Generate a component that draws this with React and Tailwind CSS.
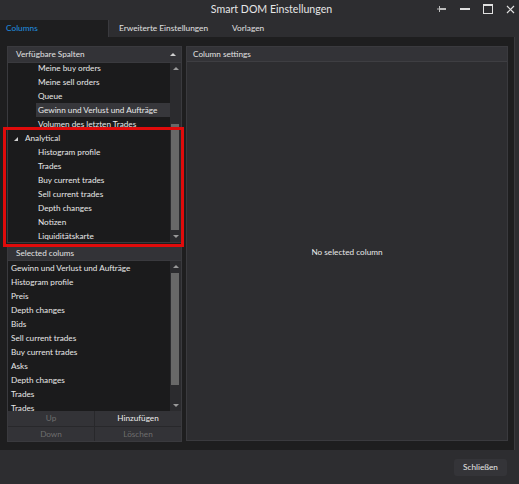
import React from "react";

const AVAILABLE = [
  { label: "Meine buy orders" },
  { label: "Meine sell orders" },
  { label: "Queue" },
  { label: "Gewinn und Verlust und Aufträge", selected: true },
  { label: "Volumen des letzten Trades" },
  { label: "Analytical", group: true },
  { label: "Histogram profile" },
  { label: "Trades" },
  { label: "Buy current trades" },
  { label: "Sell current trades" },
  { label: "Depth changes" },
  { label: "Notizen" },
  { label: "Liquiditätskarte" },
];

const SELECTED = [
  "Gewinn und Verlust und Aufträge",
  "Histogram profile",
  "Preis",
  "Depth changes",
  "Bids",
  "Sell current trades",
  "Buy current trades",
  "Asks",
  "Depth changes",
  "Trades",
  "Trades",
];

function ScrollBar({ thumbTop, thumbHeight }) {
  return (
    <div className="relative w-[11px] shrink-0 bg-[#2b2b2e]">
      <div className="absolute left-[3px] top-[4px] h-0 w-0 border-x-[3px] border-b-[3px] border-x-transparent border-b-[#9a9a9a]" />
      <div
        className="absolute left-[1px] w-[8px] bg-[#686868]"
        style={{ top: thumbTop, height: thumbHeight }}
      />
      <div className="absolute bottom-[4px] left-[3px] h-0 w-0 border-x-[3px] border-t-[3px] border-x-transparent border-t-[#9a9a9a]" />
    </div>
  );
}

export default function App() {
  return (
    <div
      className="flex h-[484px] w-[519px] flex-col overflow-hidden bg-[#2d2d30] text-[8.2px] text-[#e0e0e0]"
      style={{ fontFamily: '"Segoe UI", Lato, "Noto Sans", sans-serif' }}
    >
      {/* title bar */}
      <div className="relative flex h-[20px] shrink-0 items-center justify-center">
        <span className="ml-[24px] text-[10.6px] text-[#e6e6e6]">Smart DOM Einstellungen</span>
        <div className="absolute right-[4px] top-0 flex h-[18px] items-center gap-[13px]">
          <svg width="10" height="8" viewBox="0 0 10 8">
            <rect x="2" y="3" width="7" height="2" fill="#bdbdbd" />
            <rect x="0" y="3.5" width="2" height="1" fill="#bdbdbd" />
            <rect x="2" y="1" width="1" height="6" fill="#bdbdbd" />
          </svg>
          <svg width="10" height="8" viewBox="0 0 10 8">
            <rect x="0" y="3" width="10" height="2" fill="#e0e0e0" />
          </svg>
          <svg width="10" height="10" viewBox="0 0 10 10">
            <rect x="0.5" y="0.5" width="9" height="9" fill="none" stroke="#e0e0e0" />
            <rect x="0.5" y="0.5" width="9" height="1.5" fill="#e0e0e0" />
          </svg>
          <svg width="9" height="9" viewBox="0 0 9 9">
            <path d="M1 1L8 8M8 1L1 8" stroke="#e0e0e0" strokeWidth="1.2" />
          </svg>
        </div>
      </div>

      {/* tabs */}
      <div className="flex h-[17px] shrink-0 items-center text-[8.3px]">
        <div className="flex h-full w-[109px] items-center border-r border-[#3a3a3e] bg-[#1e1e1f] pl-[6px] text-[#1e8fe0]">
          Columns
        </div>
        <div className="pl-[10px]">Erweiterte Einstellungen</div>
        <div className="pl-[24px]">Vorlagen</div>
      </div>

      {/* content */}
      <div className="flex min-h-0 flex-1">
        <div className="flex w-[515px] gap-[4px] border-r border-[#3a3a3e] bg-[#1e1e1f] pb-[8px] pl-[7px] pt-[9px]">
          {/* left column */}
          <div className="relative flex w-[175px] flex-col">
            <div className="flex h-[197px] flex-col border border-[#3a3a3e] bg-[#2b2b2e]">
              <div className="flex h-[16px] shrink-0 items-center justify-between border-b border-[#3a3a3e] bg-[#333337] pl-[8px] pr-[4px] text-[#e2e2e2]">
                <span>Verfügbare Spalten</span>
                <span className="mr-[1px] h-0 w-0 border-x-[3px] border-b-[3px] border-x-transparent border-b-[#d0d0d0]" />
              </div>
              <div className="flex min-h-0 flex-1">
                <div className="min-w-0 flex-1 overflow-hidden bg-[#1b1b1c]">
                  <div className="-mt-[2px]">
                    {AVAILABLE.map((item, i) => (
                      <div key={i} className="flex h-[14px] items-center whitespace-nowrap">
                        {item.group ? (
                          <>
                            <span className="ml-[6px] mt-[1px] h-0 w-0 border-b-[4px] border-l-[4px] border-b-[#d0d0d0] border-l-transparent" />
                            <span className="ml-[7px] text-[#e8e8e8]">{item.label}</span>
                          </>
                        ) : (
                          <span
                            className={
                              "ml-[28px] flex h-full flex-1 items-center pl-[2px] text-[#e8e8e8] " +
                              (item.selected ? "bg-[#37373b]" : "")
                            }
                          >
                            {item.label}
                          </span>
                        )}
                      </div>
                    ))}
                  </div>
                </div>
                <ScrollBar thumbTop={61} thumbHeight={106} />
              </div>
            </div>

            {/* splitter */}
            <div className="flex h-[3px] items-center justify-center gap-[1px]">
              <span className="h-[1px] w-[1px] bg-[#777]" />
              <span className="h-[1px] w-[1px] bg-[#777]" />
              <span className="h-[1px] w-[1px] bg-[#777]" />
            </div>

            <div className="flex min-h-0 flex-1 flex-col border border-[#3a3a3e] bg-[#2b2b2e]">
              <div className="flex h-[14px] shrink-0 items-center border-b border-[#3a3a3e] bg-[#333337] pl-[8px] text-[#e2e2e2]">
                Selected colums
              </div>
              <div className="flex h-[150px] shrink-0">
                <div className="min-w-0 flex-1 overflow-hidden bg-[#1b1b1c]">
                  {SELECTED.map((label, i) => (
                    <div key={i} className="flex h-[14px] items-center whitespace-nowrap pl-[3px] text-[#e8e8e8]">
                      {label}
                    </div>
                  ))}
                </div>
                <ScrollBar thumbTop={12} thumbHeight={112} />
              </div>
              <div className="grid flex-1 grid-cols-2 grid-rows-2 gap-[1px] bg-[#28282b]">
                <button className="bg-[#333337] text-[#6e6e6e]">Up</button>
                <button className="bg-[#333337] text-[#ececec]">Hinzufügen</button>
                <button className="bg-[#333337] text-[#6e6e6e]">Down</button>
                <button className="bg-[#333337] text-[#6e6e6e]">Löschen</button>
              </div>
            </div>

            {/* annotation */}
            <div className="pointer-events-none absolute left-[-4px] top-[81px] h-[120px] w-[181px] border-[3px] border-[#e00b0b]" />
          </div>

          {/* right panel */}
          <div className="mb-[1px] flex w-[322px] flex-col border border-[#3a3a3e] bg-[#2d2d30]">
            <div className="flex h-[15px] shrink-0 items-center border-b border-[#3e3e42] bg-[#333337] pl-[6px] text-[#e2e2e2]">
              Column settings
            </div>
            <div className="flex flex-1 items-center justify-center pt-[2px] text-[#e8e8e8]">
              No selected column
            </div>
          </div>
        </div>
      </div>

      {/* footer */}
      <div className="flex h-[34px] shrink-0 items-center justify-end pr-[12px]">
        <button className="h-[17px] w-[53px] rounded-[3px] bg-[#343438] text-[#e6e6e6]">Schließen</button>
      </div>
    </div>
  );
}
